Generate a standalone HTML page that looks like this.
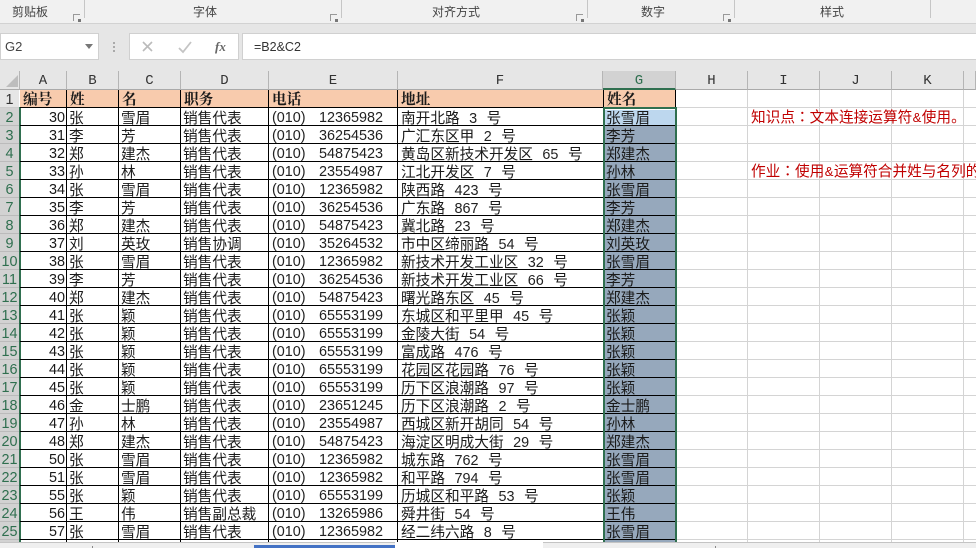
<!DOCTYPE html>
<html><head><meta charset="utf-8">
<style>
html,body{margin:0;padding:0;background:#fff}
#p{position:relative;width:976px;height:548px;overflow:hidden;background:#fff;font-family:"Liberation Sans","Noto Sans CJK SC",sans-serif;color:#222}
.a{position:absolute}
.rb{left:0;top:0;width:976px;height:23px;background:#f1f1f1;border-bottom:1px solid #d2d2d2}
.gl{font-size:12px;top:4px;color:#444;line-height:16px;white-space:nowrap}
.sep{top:0;width:1px;height:18px;background:#c6c6c6}
.lch{top:14px;width:6px;height:6px;border-left:1px solid #999;border-top:1px solid #999}
.lch:after{content:"";position:absolute;right:-1px;bottom:-1px;width:3px;height:3px;background:#777}
.ch{top:71px;height:19px;background:#e6e6e6;border-right:1px solid #b5b5b5;box-sizing:border-box;text-align:center;font:14px/20px "Liberation Mono",monospace;color:#333;border-bottom:1px solid #aaa}
.rh{left:0;width:19px;height:18px;background:#e6e6e6;text-align:center;font:14.4px/20px "Liberation Sans",sans-serif;border-bottom:1px solid #ccc;box-sizing:border-box;color:#333;overflow:hidden}
.rh.s{background:#d2d2d2;color:#2f6f4f;border-bottom-color:#bbb}
table,tbody{display:block}
table{position:absolute;left:20px;top:90px;width:656px;font-family:"WenQuanYi Zen Hei","Noto Sans CJK SC",sans-serif;font-size:14.67px;color:#1a1a1a}
tr{display:flex;height:18px}
td{display:block;box-sizing:border-box;height:18px;padding:0 0 0 2px;border-right:1px solid #000;border-bottom:1px solid #000;white-space:nowrap;overflow:hidden;line-height:20px;flex:none}
td:nth-child(1){width:47px}td:nth-child(2){width:52px}td:nth-child(3){width:62px}td:nth-child(4){width:88px}td:nth-child(5){width:129px}td:nth-child(6){width:206px}td:nth-child(7){width:72px}
tr.h td{background:#f8cbad;font-weight:bold;padding-left:3px;font-family:"Noto Serif CJK SC",serif;line-height:17px}
td.n{text-align:right;padding:0 1px 0 0;font-family:"Liberation Sans",sans-serif;font-size:14.4px;font-weight:normal}
td.t{font-family:"Liberation Sans",sans-serif;font-size:14.4px;word-spacing:9.4px;padding-left:3px;color:#222}
td.f{font-family:"Liberation Sans","WenQuanYi Zen Hei",sans-serif;font-size:14.4px;word-spacing:5.5px;padding-left:3px;color:#222}
td.f i{font-style:normal;font-size:14.67px;font-family:"WenQuanYi Zen Hei","Noto Sans CJK SC",sans-serif;color:#1a1a1a}
td.g{background:#96a8bc;padding-left:2px}
td.g1{background:#bdd7ee}
.red{color:#c00000;font-size:14.67px;line-height:18px;white-space:nowrap;font-family:"WenQuanYi Zen Hei","Noto Sans CJK SC",sans-serif}
.red b{font-weight:normal;font-family:"Noto Sans CJK TC",sans-serif}
.red u{text-decoration:none;font-family:"Liberation Sans",sans-serif;font-size:13px;display:inline-block;width:9.5px;text-align:center}
</style></head><body><div id="p">
<div class="a rb"></div>
<div class="a" style="left:0;top:24px;width:976px;height:47px;background:#e6e6e6"></div>
<div class="a" style="left:0;top:33px;width:99px;height:27px;background:#fff;border:1px solid #d0d0d0;box-sizing:border-box;font-size:13px;line-height:26px;padding-left:4px;color:#444">G2</div>
<div class="a" style="left:85px;top:44px;width:0;height:0;border:4px solid transparent;border-top:5px solid #777"></div>
<div class="a" style="left:113px;top:42px;width:2px;height:10px;border-left:2px dotted #aaa"></div>
<div class="a" style="left:129px;top:33px;width:110px;height:27px;background:#fff;border:1px solid #d0d0d0;box-sizing:border-box"></div>
<svg class="a" style="left:129px;top:33px" width="110" height="27"><path d="M14 9l9 9M23 9l-9 9" stroke="#bbb" stroke-width="1.6" fill="none"/><path d="M50 15l4 4 8-10" stroke="#c4c4c4" stroke-width="1.8" fill="none"/><text x="86" y="18" font-family="Liberation Serif" font-style="italic" font-weight="bold" font-size="13" fill="#666">fx</text></svg>
<div class="a" style="left:242px;top:33px;width:734px;height:27px;background:#fff;border:1px solid #d0d0d0;border-right:0;box-sizing:border-box;font-size:12.5px;line-height:26px;padding-left:11px;color:#333">=B2&amp;C2</div>
<div class="a gl" style="left:12px">剪贴板</div><div class="a lch" style="left:73px"></div><div class="a sep" style="left:84px"></div>
<div class="a gl" style="left:193px">字体</div><div class="a lch" style="left:330px"></div><div class="a sep" style="left:341px"></div>
<div class="a gl" style="left:432px">对齐方式</div><div class="a lch" style="left:576px"></div><div class="a sep" style="left:587px"></div>
<div class="a gl" style="left:641px">数字</div><div class="a lch" style="left:723px"></div><div class="a sep" style="left:734px"></div>
<div class="a gl" style="left:820px">样式</div><div class="a sep" style="left:930px"></div>
<div class="a" style="left:0;top:71px;width:20px;height:19px;background:#e6e6e6;border-right:1px solid #b5b5b5;border-bottom:1px solid #aaa;box-sizing:border-box"></div>
<div class="a" style="left:6px;top:75px;width:0;height:0;border-bottom:12px solid #bdbdbd;border-left:12px solid transparent"></div>
<div class="a ch" style="left:20px;width:47px">A</div><div class="a ch" style="left:67px;width:52px">B</div><div class="a ch" style="left:119px;width:62px">C</div><div class="a ch" style="left:181px;width:88px">D</div><div class="a ch" style="left:269px;width:129px">E</div><div class="a ch" style="left:398px;width:205px">F</div><div class="a ch" style="left:603px;width:73px;background:#d2d2d2;color:#2f6f4f;border-bottom:2px solid #2f6f4f;">G</div><div class="a ch" style="left:676px;width:72px">H</div><div class="a ch" style="left:748px;width:72px">I</div><div class="a ch" style="left:820px;width:72px">J</div><div class="a ch" style="left:892px;width:72px">K</div><div class="a ch" style="left:964px;width:12px"></div>
<div class="a rh" style="top:90px">1</div>
<div class="a rh s" style="top:108px">2</div><div class="a rh s" style="top:126px">3</div><div class="a rh s" style="top:144px">4</div><div class="a rh s" style="top:162px">5</div><div class="a rh s" style="top:180px">6</div><div class="a rh s" style="top:198px">7</div><div class="a rh s" style="top:216px">8</div><div class="a rh s" style="top:234px">9</div><div class="a rh s" style="top:252px">10</div><div class="a rh s" style="top:270px">11</div><div class="a rh s" style="top:288px">12</div><div class="a rh s" style="top:306px">13</div><div class="a rh s" style="top:324px">14</div><div class="a rh s" style="top:342px">15</div><div class="a rh s" style="top:360px">16</div><div class="a rh s" style="top:378px">17</div><div class="a rh s" style="top:396px">18</div><div class="a rh s" style="top:414px">19</div><div class="a rh s" style="top:432px">20</div><div class="a rh s" style="top:450px">21</div><div class="a rh s" style="top:468px">22</div><div class="a rh s" style="top:486px">23</div><div class="a rh s" style="top:504px">24</div><div class="a rh s" style="top:522px">25</div><div class="a rh s" style="top:540px"></div>
<div class="a" style="left:19px;top:107px;width:2px;height:435px;background:#2f6f4f"></div>
<div class="a" style="left:676px;top:90px;width:300px;height:452px;background-image:linear-gradient(to right,#d4d4d4 1px,transparent 1px),linear-gradient(to bottom,#d4d4d4 1px,transparent 1px);background-size:72px 18px;background-position:71px 17px"></div>
<table>
<tr class="h"><td>编号</td><td>姓</td><td>名</td><td>职务</td><td>电话</td><td>地址</td><td>姓名</td></tr>
<tr><td class="n">30</td><td>张</td><td>雪眉</td><td>销售代表</td><td class="t">(010) 12365982</td><td class="f"><i>南开北路</i> 3 <i>号</i></td><td class="g g1">张雪眉</td></tr>
<tr><td class="n">31</td><td>李</td><td>芳</td><td>销售代表</td><td class="t">(010) 36254536</td><td class="f"><i>广汇东区甲</i> 2 <i>号</i></td><td class="g">李芳</td></tr>
<tr><td class="n">32</td><td>郑</td><td>建杰</td><td>销售代表</td><td class="t">(010) 54875423</td><td class="f"><i>黄岛区新技术开发区</i> 65 <i>号</i></td><td class="g">郑建杰</td></tr>
<tr><td class="n">33</td><td>孙</td><td>林</td><td>销售代表</td><td class="t">(010) 23554987</td><td class="f"><i>江北开发区</i> 7 <i>号</i></td><td class="g">孙林</td></tr>
<tr><td class="n">34</td><td>张</td><td>雪眉</td><td>销售代表</td><td class="t">(010) 12365982</td><td class="f"><i>陕西路</i> 423 <i>号</i></td><td class="g">张雪眉</td></tr>
<tr><td class="n">35</td><td>李</td><td>芳</td><td>销售代表</td><td class="t">(010) 36254536</td><td class="f"><i>广东路</i> 867 <i>号</i></td><td class="g">李芳</td></tr>
<tr><td class="n">36</td><td>郑</td><td>建杰</td><td>销售代表</td><td class="t">(010) 54875423</td><td class="f"><i>冀北路</i> 23 <i>号</i></td><td class="g">郑建杰</td></tr>
<tr><td class="n">37</td><td>刘</td><td>英玫</td><td>销售协调</td><td class="t">(010) 35264532</td><td class="f"><i>市中区缔丽路</i> 54 <i>号</i></td><td class="g">刘英玫</td></tr>
<tr><td class="n">38</td><td>张</td><td>雪眉</td><td>销售代表</td><td class="t">(010) 12365982</td><td class="f"><i>新技术开发工业区</i> 32 <i>号</i></td><td class="g">张雪眉</td></tr>
<tr><td class="n">39</td><td>李</td><td>芳</td><td>销售代表</td><td class="t">(010) 36254536</td><td class="f"><i>新技术开发工业区</i> 66 <i>号</i></td><td class="g">李芳</td></tr>
<tr><td class="n">40</td><td>郑</td><td>建杰</td><td>销售代表</td><td class="t">(010) 54875423</td><td class="f"><i>曙光路东区</i> 45 <i>号</i></td><td class="g">郑建杰</td></tr>
<tr><td class="n">41</td><td>张</td><td>颖</td><td>销售代表</td><td class="t">(010) 65553199</td><td class="f"><i>东城区和平里甲</i> 45 <i>号</i></td><td class="g">张颖</td></tr>
<tr><td class="n">42</td><td>张</td><td>颖</td><td>销售代表</td><td class="t">(010) 65553199</td><td class="f"><i>金陵大街</i> 54 <i>号</i></td><td class="g">张颖</td></tr>
<tr><td class="n">43</td><td>张</td><td>颖</td><td>销售代表</td><td class="t">(010) 65553199</td><td class="f"><i>富成路</i> 476 <i>号</i></td><td class="g">张颖</td></tr>
<tr><td class="n">44</td><td>张</td><td>颖</td><td>销售代表</td><td class="t">(010) 65553199</td><td class="f"><i>花园区花园路</i> 76 <i>号</i></td><td class="g">张颖</td></tr>
<tr><td class="n">45</td><td>张</td><td>颖</td><td>销售代表</td><td class="t">(010) 65553199</td><td class="f"><i>历下区浪潮路</i> 97 <i>号</i></td><td class="g">张颖</td></tr>
<tr><td class="n">46</td><td>金</td><td>士鹏</td><td>销售代表</td><td class="t">(010) 23651245</td><td class="f"><i>历下区浪潮路</i> 2 <i>号</i></td><td class="g">金士鹏</td></tr>
<tr><td class="n">47</td><td>孙</td><td>林</td><td>销售代表</td><td class="t">(010) 23554987</td><td class="f"><i>西城区新开胡同</i> 54 <i>号</i></td><td class="g">孙林</td></tr>
<tr><td class="n">48</td><td>郑</td><td>建杰</td><td>销售代表</td><td class="t">(010) 54875423</td><td class="f"><i>海淀区明成大街</i> 29 <i>号</i></td><td class="g">郑建杰</td></tr>
<tr><td class="n">50</td><td>张</td><td>雪眉</td><td>销售代表</td><td class="t">(010) 12365982</td><td class="f"><i>城东路</i> 762 <i>号</i></td><td class="g">张雪眉</td></tr>
<tr><td class="n">51</td><td>张</td><td>雪眉</td><td>销售代表</td><td class="t">(010) 12365982</td><td class="f"><i>和平路</i> 794 <i>号</i></td><td class="g">张雪眉</td></tr>
<tr><td class="n">55</td><td>张</td><td>颖</td><td>销售代表</td><td class="t">(010) 65553199</td><td class="f"><i>历城区和平路</i> 53 <i>号</i></td><td class="g">张颖</td></tr>
<tr><td class="n">56</td><td>王</td><td>伟</td><td>销售副总裁</td><td class="t">(010) 13265986</td><td class="f"><i>舜井街</i> 54 <i>号</i></td><td class="g">王伟</td></tr>
<tr><td class="n">57</td><td>张</td><td>雪眉</td><td>销售代表</td><td class="t">(010) 12365982</td><td class="f"><i>经二纬六路</i> 8 <i>号</i></td><td class="g">张雪眉</td></tr>
<tr><td></td><td></td><td></td><td></td><td></td><td></td><td class="g"></td></tr>
</table>
<div class="a" style="left:603px;top:107px;width:74px;height:436px;border:2px solid #2f6f4f;border-bottom:0;box-sizing:border-box"></div>
<div class="a" style="left:605px;top:109px;width:70px;height:1px;background:#fff"></div>
<div class="a red" style="left:751px;top:108px">知识点<b>：</b>文本连接运算符<u>&amp;</u>使用。</div>
<div class="a red" style="left:751px;top:162px">作业<b>：</b>使用<u>&amp;</u>运算符合并姓与名列的</div>
<div class="a" style="left:0;top:542px;width:976px;height:6px;background:#efefef;border-top:1px solid #c4c4c4;box-sizing:border-box"></div>
<div class="a" style="left:254px;top:545px;width:141px;height:3px;background:#4472c4"></div>
<div class="a" style="left:395px;top:542px;width:148px;height:6px;background:#fff"></div>
<div class="a" style="left:92px;top:546px;width:1px;height:2px;background:#888"></div>
<div class="a" style="left:715px;top:546px;width:1px;height:2px;background:#888"></div>
</div></body></html>
